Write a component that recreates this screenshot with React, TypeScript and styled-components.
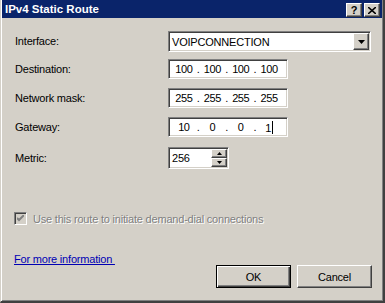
import { Fragment } from 'react';
import styled, { createGlobalStyle } from 'styled-components';

const GlobalStyle = createGlobalStyle`
    html, body {
        margin: 0;
        padding: 0;
        background: #d4d0c8;
    }
    * {
        box-sizing: border-box;
    }
`;

// classic 3d edges
const raised = `
    border-style: solid;
    border-width: 1px;
    border-color: #ffffff #404040 #404040 #ffffff;
    box-shadow: inset -1px -1px #808080, inset 1px 1px #d4d0c8;
`;
const sunken = `
    border-style: solid;
    border-width: 1px;
    border-color: #808080 #ffffff #ffffff #808080;
    box-shadow: inset 1px 1px #404040, inset -1px -1px #d4d0c8;
`;

const Window = styled.div`
    width: 385px;
    height: 303px;
    display: flex;
    flex-direction: column;
    background: #d4d0c8;
    border-left: 1px solid #d4d0c8;
    border-right: 2px solid #404040;
    border-bottom: 2px solid #404040;
    box-shadow: inset 1px 0 #ffffff, inset -1px -1px #808080;
    padding: 0 1px 1px 1px;
    font-family: 'Liberation Sans', Arial, sans-serif;
    font-size: 11px;
    letter-spacing: -0.2px;
    color: #000;
`;

const TitleBar = styled.div`
    height: 18px;
    background: #0a246a;
    display: flex;
    align-items: flex-start;
    padding: 0 2px 0 2px;
    letter-spacing: 0;
`;

const Title = styled.div`
    flex: 1;
    color: #fff;
    font-weight: bold;
    font-size: 11.5px;
    line-height: 18px;
    padding-left: 1px;
`;

const CaptionButton = styled.div`
    width: 16px;
    height: 14px;
    margin-top: 3px;
    margin-left: 2px;
    background: #d4d0c8;
    ${raised};
    display: flex;
    align-items: center;
    justify-content: center;
    font-weight: bold;
    font-size: 11px;
    line-height: 1;
    color: #000;
`;

const Body = styled.div`
    flex: 1;
    display: flex;
    flex-direction: column;
    padding: 12px 10px 0 12px;
`;

const FieldRow = styled.div`
    height: 29px;
    display: flex;
    align-items: flex-start;
`;

const Label = styled.div<{ $h: number; $top?: number }>`
    width: 154px;
    padding-left: 1px;
    height: ${p => p.$h}px;
    margin-top: ${p => p.$top ?? 0}px;
    line-height: ${p => p.$h}px;
`;

const Combo = styled.div`
    width: 203px;
    height: 21px;
    margin-top: 1px;
    background: #fff;
    ${sunken};
    display: flex;
    align-items: center;
    padding: 1px 1px 1px 2px;
`;

const ComboText = styled.div`
    flex: 1;
    padding-left: 1px;
`;

const DropButton = styled.div`
    width: 16px;
    height: 17px;
    background: #d4d0c8;
    ${raised};
    display: flex;
    align-items: center;
    justify-content: center;
`;

const IpBox = styled.div`
    width: 120px;
    height: 20px;
    background: #fff;
    ${sunken};
    display: grid;
    grid-template-columns: 1fr auto 1fr auto 1fr auto 1fr;
    align-items: center;
    padding: 0 6px 0 3px;
    letter-spacing: -0.4px;
`;

const IpPart = styled.span`
    text-align: center;
`;

const Dot = styled.span`
    padding: 0 1px;
`;

const Caret = styled.span`
    display: inline-block;
    width: 1px;
    height: 13px;
    background: #000;
    vertical-align: -2px;
    margin-left: 1px;
`;

const SpinBox = styled.div`
    width: 61px;
    height: 22px;
    margin-top: 1px;
    background: #fff;
    ${sunken};
    display: flex;
    padding: 1px 1px 1px 2px;
`;

const SpinText = styled.div`
    flex: 1;
    line-height: 18px;
    padding-left: 1px;
`;

const SpinButtons = styled.div`
    width: 16px;
    display: flex;
    flex-direction: column;
`;

const SpinButton = styled.div`
    flex: 1;
    background: #d4d0c8;
    ${raised};
    display: flex;
    align-items: center;
    justify-content: center;
`;

const CheckRow = styled.div`
    margin-top: 37px;
    display: flex;
    align-items: center;
    height: 13px;
`;

const CheckBox = styled.div`
    width: 13px;
    height: 13px;
    background: #d4d0c8;
    ${sunken};
    display: flex;
    align-items: center;
    justify-content: center;
`;

const CheckLabel = styled.span`
    margin-left: 6px;
    color: #808080;
    text-shadow: 1px 1px #ffffff;
`;

const Footer = styled.div`
    margin-top: 26px;
    display: flex;
    align-items: flex-start;
`;

const Link = styled.a`
    flex: 1;
    line-height: 14px;
    color: #0000b4;
    text-decoration: underline;
    padding-top: 1px;
    white-space: pre;
`;

const Buttons = styled.div`
    display: flex;
    gap: 6px;
    margin-top: 14px;
`;

const PushButton = styled.div<{ $default?: boolean }>`
    width: 75px;
    height: 23px;
    background: #d4d0c8;
    display: flex;
    align-items: center;
    justify-content: center;
    border-style: solid;
    border-width: 1px;
    ${p =>
        p.$default
            ? `border-color: #000;
               box-shadow: inset 1px 1px #fff, inset -1px -1px #404040, inset -2px -2px #808080;`
            : `border-color: #ffffff #404040 #404040 #ffffff;
               box-shadow: inset -1px -1px #808080, inset 1px 1px #d4d0c8;`}
`;

const Arrow = ({ up, w = 7 }: { up?: boolean; w?: number }) => {
    const h = Math.ceil(w / 2);
    return (
        <svg width={w} height={h} viewBox={`0 0 ${w} ${h}`}>
            <polygon
                points={up ? `0,${h} ${w},${h} ${w / 2},0` : `0,0 ${w},0 ${w / 2},${h}`}
                fill="#000"
            />
        </svg>
    );
};

const IpField = ({ parts, caret }: { parts: string[]; caret?: boolean }) => (
    <IpBox>
        {parts.map((p, i) => (
            <Fragment key={i}>
                <IpPart>
                    {p}
                    {caret && i === parts.length - 1 && <Caret />}
                </IpPart>
                {i < parts.length - 1 && <Dot>.</Dot>}
            </Fragment>
        ))}
    </IpBox>
);

const App = () => {
    return (
        <>
            <GlobalStyle />
            <Window>
                <TitleBar>
                    <Title>IPv4 Static Route</Title>
                    <CaptionButton>?</CaptionButton>
                    <CaptionButton>
                        <svg width="8" height="7" viewBox="0 0 8 7">
                            <path d="M0 0 L8 7 M8 0 L0 7" stroke="#000" strokeWidth="1.6" />
                        </svg>
                    </CaptionButton>
                </TitleBar>
                <Body>
                    <FieldRow>
                        <Label $h={21} $top={1}>Interface:</Label>
                        <Combo>
                            <ComboText>VOIPCONNECTION</ComboText>
                            <DropButton>
                                <Arrow />
                            </DropButton>
                        </Combo>
                    </FieldRow>
                    <FieldRow>
                        <Label $h={20}>Destination:</Label>
                        <IpField parts={['100', '100', '100', '100']} />
                    </FieldRow>
                    <FieldRow>
                        <Label $h={20}>Network mask:</Label>
                        <IpField parts={['255', '255', '255', '255']} />
                    </FieldRow>
                    <FieldRow>
                        <Label $h={20}>Gateway:</Label>
                        <IpField parts={['10', '0', '0', '1']} caret />
                    </FieldRow>
                    <FieldRow>
                        <Label $h={22} $top={1}>Metric:</Label>
                        <SpinBox>
                            <SpinText>256</SpinText>
                            <SpinButtons>
                                <SpinButton>
                                    <Arrow up w={5} />
                                </SpinButton>
                                <SpinButton>
                                    <Arrow w={5} />
                                </SpinButton>
                            </SpinButtons>
                        </SpinBox>
                    </FieldRow>
                    <CheckRow>
                        <CheckBox>
                            <svg width="7" height="7" viewBox="0 0 7 7">
                                <path d="M0 3 L2 5 L7 0" stroke="#808080" strokeWidth="2" fill="none" />
                            </svg>
                        </CheckBox>
                        <CheckLabel>Use this route to initiate demand-dial connections</CheckLabel>
                    </CheckRow>
                    <Footer>
                        <Link>{'For more information '}</Link>
                        <Buttons>
                            <PushButton $default>OK</PushButton>
                            <PushButton>Cancel</PushButton>
                        </Buttons>
                    </Footer>
                </Body>
            </Window>
        </>
    );
};

export default App;
